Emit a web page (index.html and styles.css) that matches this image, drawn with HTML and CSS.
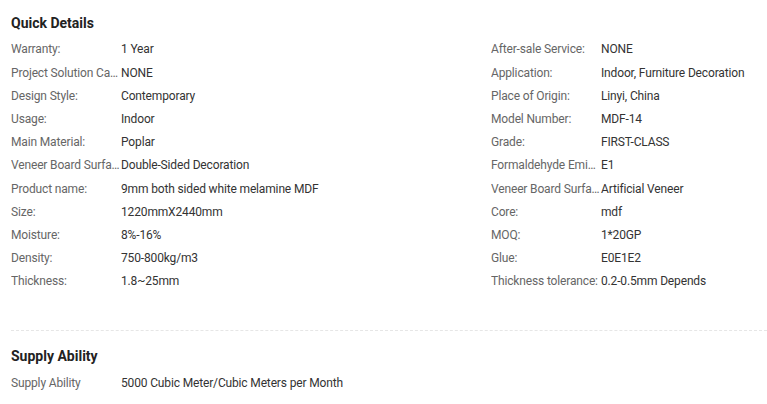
FILE: index.html
```html
<!DOCTYPE html>
<html>
<head>
<meta charset="utf-8">
<link rel="stylesheet" href="styles.css">
</head>
<body>
<div class="page">
  <section class="block">
    <h2 class="title">Quick Details</h2>
    <div class="grid">
      <div class="col">
        <div class="row"><span class="lbl">Warranty:</span><span class="val">1 Year</span></div>
        <div class="row"><span class="lbl">Project Solution Capability:</span><span class="val">NONE</span></div>
        <div class="row"><span class="lbl">Design Style:</span><span class="val">Contemporary</span></div>
        <div class="row"><span class="lbl">Usage:</span><span class="val">Indoor</span></div>
        <div class="row"><span class="lbl">Main Material:</span><span class="val">Poplar</span></div>
        <div class="row"><span class="lbl">Veneer Board Surface Finishing:</span><span class="val">Double-Sided Decoration</span></div>
        <div class="row"><span class="lbl">Product name:</span><span class="val">9mm both sided white melamine MDF</span></div>
        <div class="row"><span class="lbl">Size:</span><span class="val">1220mmX2440mm</span></div>
        <div class="row"><span class="lbl">Moisture:</span><span class="val">8%-16%</span></div>
        <div class="row"><span class="lbl">Density:</span><span class="val">750-800kg/m3</span></div>
        <div class="row"><span class="lbl">Thickness:</span><span class="val">1.8~25mm</span></div>
      </div>
      <div class="col">
        <div class="row"><span class="lbl">After-sale Service:</span><span class="val">NONE</span></div>
        <div class="row"><span class="lbl">Application:</span><span class="val">Indoor, Furniture Decoration</span></div>
        <div class="row"><span class="lbl">Place of Origin:</span><span class="val">Linyi, China</span></div>
        <div class="row"><span class="lbl">Model Number:</span><span class="val">MDF-14</span></div>
        <div class="row"><span class="lbl">Grade:</span><span class="val">FIRST-CLASS</span></div>
        <div class="row"><span class="lbl">Formaldehyde Emission Standards:</span><span class="val">E1</span></div>
        <div class="row"><span class="lbl">Veneer Board Surface Finishing:</span><span class="val">Artificial Veneer</span></div>
        <div class="row"><span class="lbl">Core:</span><span class="val">mdf</span></div>
        <div class="row"><span class="lbl">MOQ:</span><span class="val">1*20GP</span></div>
        <div class="row"><span class="lbl">Glue:</span><span class="val">E0E1E2</span></div>
        <div class="row"><span class="lbl">Thickness tolerance:</span><span class="val">0.2-0.5mm Depends</span></div>
      </div>
    </div>
  </section>
  <hr class="divider">
  <section class="block">
    <h2 class="title">Supply Ability</h2>
    <div class="col single">
      <div class="row"><span class="lbl">Supply Ability</span><span class="val">5000 Cubic Meter/Cubic Meters per Month</span></div>
    </div>
  </section>
</div>
</body>
</html>
```

FILE: styles.css
```css
html, body {
  margin: 0;
  padding: 0;
  background: #fff;
}
body {
  font-family: Roboto, "Liberation Sans", sans-serif;
  font-size: 12px;
  color: #333;
}
.page {
  padding: 13px 0 0 11px;
}
.title {
  margin: 0;
  font-size: 14px;
  line-height: 20px;
  font-weight: 700;
  color: #222;
}
.grid {
  display: grid;
  grid-template-columns: 480px 1fr;
  margin-top: 5.4px;
}
.col {
  display: flex;
  flex-direction: column;
}
.row {
  display: flex;
  height: 23.2px;
  line-height: 23.2px;
  white-space: nowrap;
  letter-spacing: -0.15px;
}
.lbl {
  flex: 0 0 110px;
  width: 110px;
  overflow: hidden;
  text-overflow: ellipsis;
  color: #666;
}
.val {
  color: #333;
}
.divider {
  border: 0;
  border-top: 1px dashed #e6e6e6;
  margin: 37px 0 15px 0;
  height: 0;
}
.single {
  margin-top: 5.4px;
}
```
